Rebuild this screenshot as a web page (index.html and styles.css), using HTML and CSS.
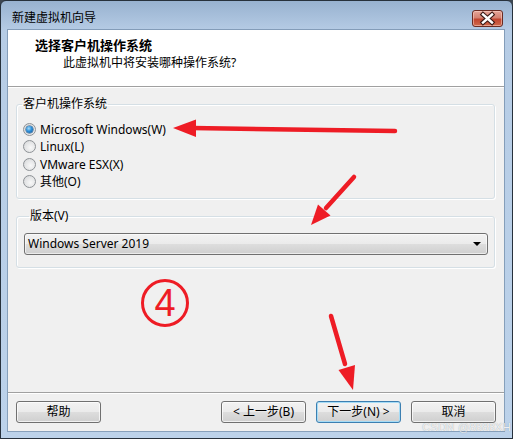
FILE: index.html
```html
<!DOCTYPE html>
<html lang="zh-CN">
<head>
<meta charset="utf-8">
<title>新建虚拟机向导</title>
<link rel="stylesheet" href="styles.css">
</head>
<body>
<div class="window">
  <div class="titlebar">
    <span class="title">新建虚拟机向导</span>
    <span class="close">
      <svg width="31" height="17" viewBox="0 0 31 17">
        <path d="M11 4.5 L20 12.5 M20 4.5 L11 12.5" stroke="#3b1a16" stroke-width="4.6" stroke-linecap="square" fill="none"/>
        <path d="M11 4.5 L20 12.5 M20 4.5 L11 12.5" stroke="#ffffff" stroke-width="2.4" stroke-linecap="square" fill="none"/>
      </svg>
    </span>
  </div>
  <div class="client">
    <div class="header">
      <div class="h-title">选择客户机操作系统</div>
      <div class="h-sub">此虚拟机中将安装哪种操作系统?</div>
    </div>
    <div class="content">
      <fieldset class="group os">
        <legend>客户机操作系统</legend>
        <div class="radio checked"><span class="dot"></span>Microsoft Windows(W)</div>
        <div class="radio"><span class="dot"></span>Linux(L)</div>
        <div class="radio"><span class="dot"></span>VMware ESX(X)</div>
        <div class="radio"><span class="dot"></span>其他(O)</div>
      </fieldset>
      <fieldset class="group ver">
        <legend>版本(V)</legend>
        <div class="combo"><span class="combo-text">Windows Server 2019</span><span class="caret"></span></div>
      </fieldset>
    </div>
    <div class="footer">
      <span class="btn">帮助</span>
      <span class="spacer"></span>
      <span class="btn">&lt; 上一步(B)</span>
      <span class="btn focus">下一步(N) &gt;</span>
      <span class="btn">取消</span>
    </div>
  </div>
  <svg class="annot" width="513" height="439" viewBox="0 0 513 439">
    <g stroke="#ee1c25" stroke-width="4.5" stroke-linecap="round" fill="none">
      <line x1="395" y1="131" x2="192" y2="128"/>
      <line x1="354" y1="177" x2="326" y2="208"/>
      <line x1="331" y1="316" x2="345" y2="364"/>
    </g>
    <g fill="#ee1c25">
      <polygon points="173,128 196,119.5 196,137"/>
      <polygon points="311,225 330.5,215.5 318,204.5"/>
      <polygon points="353,390 355,365 338.5,370"/>
    </g>
  </svg>
  <div class="step">4</div>
  <div class="watermark">CSDN @8888XH</div>
</div>
</body>
</html>
```
FILE: styles.css
```css
* { box-sizing: border-box; }
html, body { margin: 0; padding: 0; }
body {
  background: #3d4651;
  font-family: "Noto Sans", "Noto Sans CJK SC", sans-serif;
  font-size: 12px;
  color: #000;
}
.window {
  position: relative;
  width: 513px;
  height: 439px;
  border: 1px solid #27313c;
  border-radius: 6px 6px 0 0;
  background: linear-gradient(to bottom, #98b2d0 0, #b6cce5 30px, #bcd2ea 100%);
  padding: 0 8px 7px 7px;
  display: flex;
  flex-direction: column;
  overflow: hidden;
}
.titlebar {
  height: 29px;
  padding: 5px 1px 0 4px;
  display: flex;
  align-items: center;
  justify-content: space-between;
}
.title {
  font-size: 12px;
  line-height: 14px;
  color: #000;
}
.close {
  width: 31px;
  height: 17px;
  border: 1px solid #6a2b22;
  border-radius: 3px;
  background: linear-gradient(to bottom, #e6a598 0, #d48171 45%, #c1452f 55%, #cf6a4c 100%);
  box-shadow: inset 0 0 0 1px rgba(255,220,210,0.5);
  display: flex;
  align-items: center;
  justify-content: center;
  overflow: hidden;
}
.close svg { display: block; margin: -1px; }
.client {
  flex: 1;
  display: flex;
  flex-direction: column;
  background: #f0f0f0;
  box-shadow: 0 0 0 1px rgba(70,100,130,0.45);
}
.header {
  height: 57px;
  background: #fff;
  border-bottom: 1px solid #a0a0a0;
  padding-top: 7px;
}
.h-title {
  font-size: 13px;
  font-weight: bold;
  line-height: 16px;
  padding-left: 27px;
}
.h-sub {
  font-size: 12px;
  line-height: 16px;
  margin-top: 2px;
  padding-left: 55px;
}
.content {
  flex: 1;
  padding: 8px 9px 0 8px;
  border-top: 1px solid #fff;
}
.group {
  margin: 0;
  min-width: 0;
  border: 1px solid #d5dfe5;
  border-radius: 3px;
  box-shadow: inset 1px 1px 0 #fff, 1px 1px 0 #fff;
}
.group legend {
  margin-left: 5px;
  padding: 0 1px;
  font-size: 12px;
  line-height: 16px;
}
.os { padding: 9px 0 8px 0; }
.ver { padding: 9px 6px 12px 7px; margin-top: 9px; }
.radio {
  height: 17.3px;
  display: flex;
  align-items: center;
  padding-left: 6px;
  line-height: 17px;
}
.dot {
  width: 13px;
  height: 13px;
  border-radius: 50%;
  border: 1px solid #8e9296;
  background: radial-gradient(circle at 60% 60%, #f8f8f8 0, #e2e3e4 60%, #cfd0d2 100%);
  margin-right: 4px;
  position: relative;
  flex: none;
}
.checked .dot::after {
  content: "";
  position: absolute;
  left: 2px;
  top: 2px;
  width: 7px;
  height: 7px;
  border-radius: 50%;
  background: radial-gradient(circle at 40% 35%, #a8dcf9 0, #2c8fd8 45%, #174f8c 100%);
  box-shadow: 0 0 0 0.5px #1d4f7d;
}
.combo {
  height: 22px;
  border: 1px solid #707070;
  border-radius: 3px;
  background: linear-gradient(to bottom, #f2f2f2 0, #ebebeb 48%, #dddddd 52%, #cfcfcf 100%);
  box-shadow: inset 0 0 0 1px rgba(255,255,255,0.6);
  display: flex;
  align-items: center;
  justify-content: space-between;
  padding: 0 6px 0 3px;
}
.combo-text { line-height: 16px; }
.caret {
  width: 0;
  height: 0;
  border-left: 4px solid transparent;
  border-right: 4px solid transparent;
  border-top: 4px solid #000;
}
.footer {
  height: 39px;
  border-top: 1px solid #a0a0a0;
  padding: 8px 8px 8px 8px;
  display: flex;
  gap: 10px;
  box-shadow: inset 0 1px 0 #fff;
}
.spacer { flex: 1; }
.btn {
  width: 85px;
  height: 22px;
  border: 1px solid #707070;
  border-radius: 3px;
  background: linear-gradient(to bottom, #f2f2f2 0, #ebebeb 48%, #dddddd 52%, #cfcfcf 100%);
  box-shadow: inset 0 0 0 1px rgba(255,255,255,0.7);
  display: flex;
  align-items: center;
  justify-content: center;
  line-height: 16px;
  font-size: 12px;
}
.btn.focus {
  border-color: #3c7fb1;
  box-shadow: inset 0 0 0 1px #a6dcf6;
}
.annot {
  position: absolute;
  left: -1px;
  top: -1px;
  pointer-events: none;
}
.step {
  position: absolute;
  left: 140px;
  top: 278px;
  width: 48px;
  height: 48px;
  border: 3px solid #ee1c25;
  border-radius: 50%;
  display: flex;
  align-items: center;
  justify-content: center;
  color: #ee1c25;
  font-family: "Liberation Sans", sans-serif;
  font-size: 38px;
  line-height: 1;
}
.watermark {
  position: absolute;
  right: 1px;
  bottom: 5px;
  font-family: "Liberation Sans", sans-serif;
  font-size: 11px;
  line-height: 12px;
  color: rgba(255,255,255,0.85);
  text-shadow: 0 0 1px rgba(120,130,140,0.8);
  letter-spacing: 0.3px;
}
```
